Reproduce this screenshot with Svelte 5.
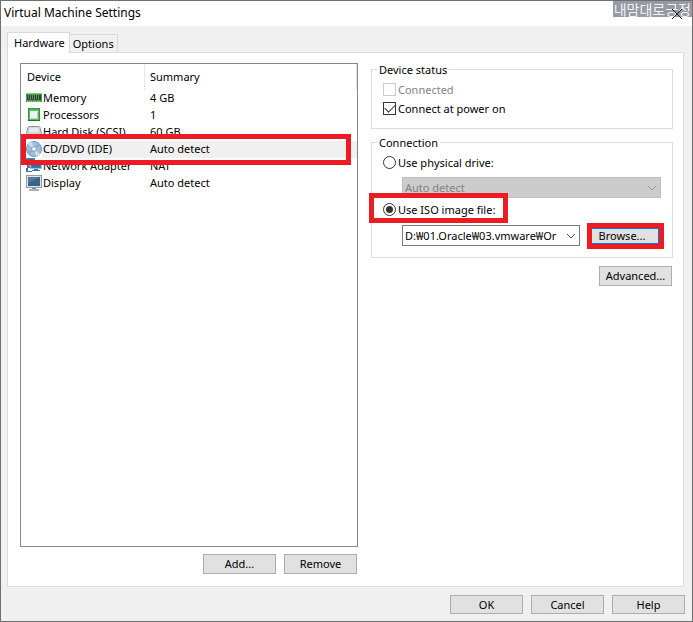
<script>
  let activeTab = $state('hardware');
  let selected = $state('cd');
  let connected = $state(false);
  let connectAtPowerOn = $state(true);
  let source = $state('iso');
  let isoPath = $state('D:₩01.Oracle₩03.vmware₩Or');

  const devices = [
    { id: 'memory', name: 'Memory', summary: '4 GB' },
    { id: 'cpu', name: 'Processors', summary: '1' },
    { id: 'disk', name: 'Hard Disk (SCSI)', summary: '60 GB' },
    { id: 'cd', name: 'CD/DVD (IDE)', summary: 'Auto detect' },
    { id: 'network', name: 'Network Adapter', summary: 'NAT' },
    { id: 'display', name: 'Display', summary: 'Auto detect' }
  ];
</script>

{#snippet deviceIcon(id)}
  <svg class="icon" viewBox="0 0 16 16" aria-hidden="true">
    {#if id === 'memory'}
      <path d="M0 3h16v9H0z" fill="#3fa650" />
      <path d="M0 3h16v1H0z" fill="#76cf82" />
      <path d="M1 5h3v5H1zM5 5h3v5H5zM9 5h3v5H9zM13 5h2v5h-2z" fill="#343b38" />
      <path d="M2 5h1v4H2zM6 5h1v4H6zM10 5h1v4h-1z" fill="#747d77" />
      <path d="M1 11h1v1H1zM3 11h1v1H3zM5 11h1v1H5zM7 11h1v1H7zM9 11h1v1H9zM11 11h1v1h-1zM13 11h1v1h-1z" fill="#a9c766" />
    {:else if id === 'cpu'}
      <path d="M2 1h12v13H2z" fill="#2c9541" />
      <path d="M3 2h10v11H3z" fill="#58b866" />
      <path d="M4 4h8v8H4z" fill="#f1f3f1" />
      <path d="M5 11.500h6.500V5" fill="none" stroke="#bfc8c0" />
      <path d="M2 13h12v1H2z" fill="#21702f" />
    {:else if id === 'disk'}
      <path d="M3.500 2.500h9q1 0 1.500 1l1.500 6v4H.500v-4l1.500-6q.5-1 1.500-1z" fill="#d3d7da" stroke="#8b9196" />
      <path d="M4 4h8l1 4H3z" fill="#e8eaec" />
      <path d="M1 10h14v4H1z" fill="#aeb5bb" />
    {:else if id === 'cd'}
      <circle cx="8" cy="8" r="7.500" fill="#9cc0da" stroke="#6f98b6" />
      <path d="M8 8L2 3A8 8 0 0 1 6 1zM8 8l6 5a8 8 0 0 1-4 2z" fill="#cfe2ef" />
      <path d="M8 8l6.500-3A7 7 0 0 0 12 2.500zM8 8l-6.500 3A7 7 0 0 0 4 13.500z" fill="#84b2d2" />
      <circle cx="8" cy="8" r="2.500" fill="#dcebf3" stroke="#7fa4bd" />
      <circle cx="8" cy="8" r="1" fill="#fff" />
    {:else if id === 'network'}
      <path d="M0 0h9v3H0z" fill="#5a84a3" />
      <path d="M1.500 1.500h5v8h-5z" fill="#4a9cd1" stroke="#466781" />
      <path d="M4.500 2.500h11v8h-11z" fill="#2585c8" stroke="#9fbcd0" />
      <path d="M6 4h8v5H6z" fill="#1976bb" />
      <path d="M8 11h4v1H8zM6 12h8v1H6zM1 10h1v3h4v1H0v-4z" fill="#47728f" />
    {:else}
      <path d="M0 0h16v13H0z" fill="#8c9daa" />
      <path d="M1 1h14v11H1z" fill="#dce4ea" />
      <path d="M2 2h12v9H2z" fill="#3d6289" />
      <path d="M2 2h12L2 8z" fill="#54799e" />
      <path d="M6 13h4v1H6z" fill="#87939c" />
      <path d="M3 14h10v2H3z" fill="#a6b1b9" />
    {/if}
  </svg>
{/snippet}

{#snippet chevron()}
  <svg class="chevron" viewBox="0 0 10 6" aria-hidden="true">
    <path d="M1 1l4 4 4-4" fill="none" stroke="currentColor" />
  </svg>
{/snippet}

<main class="window">
  <header>
    <h1>Virtual Machine Settings</h1>
    <span class="watermark">내맘대로긍정</span>
    <button class="close" aria-label="Close">
      <svg viewBox="0 0 10 10" aria-hidden="true">
        <path d="M0 0l10 10M10 0L0 10" stroke="#222" />
      </svg>
    </button>
  </header>

  <div class="tabs" role="tablist">
    <button
      role="tab"
      class:active={activeTab === 'hardware'}
      aria-selected={activeTab === 'hardware'}
      onclick={() => (activeTab = 'hardware')}>Hardware</button>
    <button
      role="tab"
      class:active={activeTab === 'options'}
      aria-selected={activeTab === 'options'}
      onclick={() => (activeTab = 'options')}>Options</button>
  </div>

  <div class="panel" role="tabpanel">
    {#if activeTab === 'hardware'}
      <section class="devices">
        <div class="list">
          <table>
            <thead>
              <tr><th class="device">Device</th><th class="summary">Summary</th></tr>
            </thead>
            <tbody>
              {#each devices as device (device.id)}
                <tr class:selected={selected === device.id} onclick={() => (selected = device.id)}>
                  <td>
                    <div class="name">
                      {@render deviceIcon(device.id)}
                      <span>{device.name}</span>
                    </div>
                  </td>
                  <td class="value">
                    {device.summary}
                    {#if device.id === 'cd'}<i class="mark row-mark"></i>{/if}
                  </td>
                </tr>
              {/each}
            </tbody>
          </table>
        </div>
        <div class="actions">
          <button class="push">Add...</button>
          <button class="push">Remove</button>
        </div>
      </section>

      <section class="settings">
        <fieldset class="status">
          <legend>Device status</legend>
          <label class="disabled">
            <input type="checkbox" bind:checked={connected} disabled />
            <span>Connected</span>
          </label>
          <label>
            <input type="checkbox" bind:checked={connectAtPowerOn} />
            <span>Connect at power on</span>
          </label>
        </fieldset>

        <fieldset class="connection">
          <legend>Connection</legend>
          <label>
            <input type="radio" value="physical" bind:group={source} />
            <span>Use physical drive:</span>
          </label>
          <div class="drive">
            <select aria-label="Physical drive" disabled={source !== 'physical'}>
              <option>Auto detect</option>
            </select>
            {@render chevron()}
          </div>
          <label class="iso">
            <input type="radio" value="iso" bind:group={source} />
            <span>Use ISO image file:</span>
            <i class="mark iso-mark"></i>
          </label>
          <div class="file">
            <div class="combo">
              <input type="text" aria-label="ISO image file" bind:value={isoPath} />
              <button aria-label="Recent files">{@render chevron()}</button>
            </div>
            <div class="browse">
              <button>Browse...</button>
              <i class="mark browse-mark"></i>
            </div>
          </div>
        </fieldset>
        <button class="push advanced">Advanced...</button>
      </section>
    {/if}
  </div>

  <footer>
    <button class="push">OK</button>
    <button class="push">Cancel</button>
    <button class="push">Help</button>
  </footer>
</main>

<style>
  :global(body) {
    margin: 0;
  }

  * {
    box-sizing: border-box;
  }

  .window {
    display: flex;
    flex-direction: column;
    min-height: 100vh;
    border: 1px solid #707070;
    background: #f0f0f0;
    color: #000;
    font-family: "Noto Sans", "Noto Sans CJK KR", sans-serif;
    font-size: 11px;
    line-height: 13px;
  }

  button,
  input,
  select {
    margin: 0;
    color: inherit;
    font: inherit;
  }

  header {
    position: relative;
    display: flex;
    align-items: center;
    justify-content: space-between;
    height: 25px;
    padding: 0 10px 0 3px;
    background: #fff;
  }

  h1 {
    margin: 0;
    padding-bottom: 2px;
    font-size: 12px;
    font-weight: 400;
    line-height: 16px;
  }

  .watermark {
    position: absolute;
    top: 0;
    right: 0;
    padding: 0 1px;
    background: #979aa2;
    color: #f1f2f4;
    font-family: "Noto Sans CJK KR", sans-serif;
    font-size: 14px;
    line-height: 16px;
    white-space: nowrap;
  }

  .close {
    position: relative;
    display: flex;
    padding: 0;
    border: 0;
    background: none;
  }

  .close svg {
    width: 10px;
    height: 10px;
  }

  .tabs {
    display: flex;
    align-items: flex-end;
    padding: 6px 6px 0;
  }

  .tabs button {
    height: 18px;
    padding: 0 3px;
    border: 1px solid #d9d9d9;
    border-width: 1px 1px 0 0;
    background: #f0f0f0;
  }

  .tabs .active {
    position: relative;
    height: 21px;
    margin-bottom: -1px;
    padding: 0 4px 2px 6px;
    border-left-width: 1px;
    background: #fff;
  }

  .panel {
    display: grid;
    flex: 1;
    grid-template-columns: minmax(0, 338fr) minmax(0, 302fr);
    gap: 13px;
    margin: 0 8px 0 6px;
    padding: 10px 10px 12px 12px;
    border: 1px solid #dcdcdc;
    background: #fff;
  }

  .devices {
    display: flex;
    flex-direction: column;
  }

  .list {
    flex: 1;
    border: 1px solid #828790;
  }

  table {
    width: 100%;
    border-spacing: 0;
    table-layout: fixed;
  }

  th {
    height: 26px;
    padding: 0 5px 2px;
    border-right: 1px solid #e5e5e5;
    font-weight: 400;
    text-align: left;
  }

  .device {
    width: 124px;
    padding-left: 6px;
  }

  td {
    height: 17px;
    padding: 0;
    white-space: nowrap;
  }

  tbody tr {
    position: relative;
  }

  .name {
    display: flex;
    height: 17px;
    padding-left: 5px;
  }

  .name span {
    flex: 1;
    padding: 1px 0 3px 1px;
  }

  .value {
    padding: 0 0 2px 5px;
  }

  .selected .name span,
  .selected .value {
    background: #f0f0f0;
  }

  .icon {
    width: 16px;
    height: 16px;
  }

  .mark {
    position: absolute;
    z-index: 1;
    border: 5px solid #ed1c24;
    pointer-events: none;
  }

  .row-mark {
    inset: -7px 6px -7px 0;
  }

  .push {
    width: 73px;
    height: 20px;
    padding: 0 0 2px;
    border: 1px solid #adadad;
    background: #e1e1e1;
  }

  .actions {
    display: flex;
    justify-content: flex-end;
    gap: 8px;
    padding: 7px 1px 0 0;
  }

  .settings {
    display: flex;
    flex-direction: column;
  }

  fieldset {
    display: flex;
    flex-direction: column;
    min-width: 0;
    margin: 0 0 7px;
    padding: 4px 8px 10px 11px;
    border: 1px solid #dcdcdc;
  }

  legend {
    margin-left: -6px;
    padding: 0 2px;
  }

  label {
    display: flex;
    align-items: center;
    align-self: flex-start;
    gap: 2px;
    height: 19px;
  }

  .disabled {
    color: #838383;
  }

  label input {
    display: grid;
    flex: none;
    place-content: center;
    width: 13px;
    height: 13px;
    border: 1px solid #333;
    background: #fff;
    appearance: none;
  }

  label input:disabled {
    border-color: #ccc;
  }

  input[type="checkbox"]:checked::before {
    width: 9px;
    height: 5px;
    margin-bottom: 3px;
    border: solid #333;
    border-width: 0 0 1px 1px;
    content: "";
    transform: rotate(-45deg);
  }

  input[type="radio"] {
    border-radius: 50%;
  }

  input[type="radio"]:checked::before {
    width: 7px;
    height: 7px;
    border-radius: 50%;
    background: #333;
    content: "";
  }

  .connection {
    padding-bottom: 8px;
  }

  .drive {
    display: grid;
    align-items: center;
    margin: 5px 3px 2px 19px;
  }

  .drive select {
    grid-area: 1 / 1;
    width: 100%;
    height: 21px;
    padding: 0 20px 0 2px;
    border: 1px solid #bfbfbf;
    border-radius: 0;
    background: #ccc;
    color: #838383;
    opacity: 1;
    appearance: none;
  }

  .drive select:enabled {
    background: #fff;
    color: #000;
  }

  .chevron {
    width: 10px;
    height: 6px;
  }

  .drive .chevron {
    grid-area: 1 / 1;
    justify-self: end;
    margin-right: 4px;
    color: #999;
    pointer-events: none;
  }

  .iso {
    position: relative;
  }

  .iso-mark {
    top: -7px;
    left: -14px;
    width: 139px;
    height: 30px;
  }

  .file {
    display: flex;
    align-items: flex-start;
    gap: 7px;
    margin: 4px 0 0 19px;
  }

  .combo {
    display: flex;
    flex: 1;
    min-width: 0;
    height: 21px;
    margin-top: 2px;
    border: 1px solid #7a7a7a;
  }

  .combo input {
    flex: 1;
    min-width: 0;
    padding: 0 0 1px 2px;
    border: 0;
    background: none;
  }

  .combo button {
    display: flex;
    align-items: center;
    padding: 0 3px;
    border: 0;
    background: none;
    color: #444;
  }

  .browse {
    position: relative;
    width: 77px;
    height: 26px;
    padding: 5px 5px 5px 1px;
  }

  .browse button {
    width: 100%;
    height: 16px;
    padding: 0 3px 1px 0;
    border: 1px solid #0078d7;
    background: #e1e1e1;
    line-height: 13px;
  }

  .browse-mark {
    inset: 0;
  }

  .advanced {
    align-self: flex-end;
    margin: 1px 1px 0 0;
  }

  footer {
    display: flex;
    justify-content: flex-end;
    gap: 8px;
    padding: 8px 7px 7px;
  }

  footer .push {
    height: 19px;
    padding-bottom: 1px;
  }
</style>
